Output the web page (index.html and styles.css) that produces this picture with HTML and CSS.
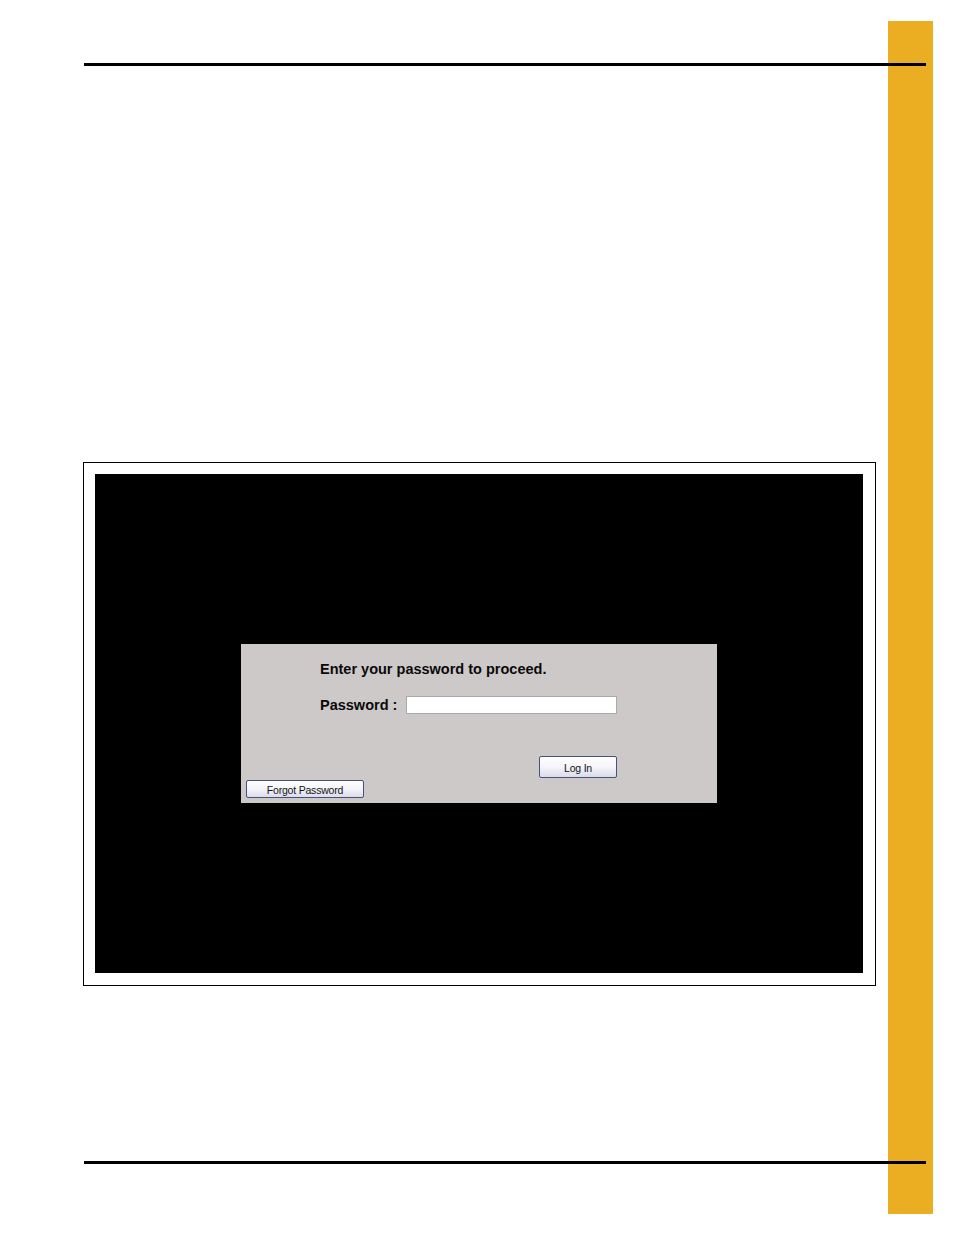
FILE: index.html
```html
<!DOCTYPE html>
<html>
<head>
<meta charset="utf-8">
<link rel="stylesheet" href="styles.css">
</head>
<body>
<div class="page">
  <div class="tab"></div>
  <div class="rule rule-top"></div>
  <div class="frame">
    <div class="screen">
      <div class="dialog">
        <div class="heading">Enter your password to proceed.</div>
        <div class="pwrow">
          <span class="label">Password :</span>
          <span class="input"></span>
        </div>
        <div class="btn login">Log In</div>
        <div class="btn forgot">Forgot Password</div>
      </div>
    </div>
  </div>
  <div class="rule rule-bottom"></div>
</div>
</body>
</html>
```
FILE: styles.css
```css
html, body {
  margin: 0;
  padding: 0;
  background: #ffffff;
}
.page {
  position: relative;
  width: 954px;
  height: 1235px;
  padding-left: 84px;
  box-sizing: border-box;
  display: flex;
  flex-direction: column;
  font-family: "Liberation Sans", Arial, sans-serif;
}
.tab {
  position: absolute;
  left: 888px;
  top: 21px;
  width: 45px;
  height: 1193px;
  background: #ebad22;
  z-index: 0;
}
.rule {
  position: relative;
  z-index: 1;
  width: 842px;
  height: 3px;
  background: #000000;
}
.rule-top {
  margin-top: 63px;
}
.frame {
  margin-top: 396px;
  margin-left: -1px;
  width: 793px;
  height: 524px;
  box-sizing: border-box;
  border: 1px solid #000000;
  padding: 11px 12px 12px 11px;
  background: #ffffff;
}
.screen {
  width: 768px;
  height: 499px;
  background: #000000;
  padding: 170px 0 0 146px;
  box-sizing: border-box;
}
.dialog {
  width: 476px;
  height: 159px;
  background: #cdc9c9;
  display: flex;
  flex-direction: column;
  align-items: flex-start;
  box-sizing: border-box;
}
.heading {
  margin: 17px 0 0 79px;
  font-weight: bold;
  font-size: 14.5px;
  line-height: 16px;
  color: #0a0a0a;
}
.pwrow {
  margin: 19px 0 0 79px;
  display: flex;
  align-items: center;
  height: 18px;
}
.label {
  font-weight: bold;
  font-size: 14.5px;
  line-height: 16px;
  color: #0a0a0a;
  width: 86px;
}
.input {
  width: 211px;
  height: 18px;
  box-sizing: border-box;
  background: #ffffff;
  border: 1px solid #a9a9b0;
}
.btn {
  box-sizing: border-box;
  border: 1px solid #46527a;
  border-radius: 2px;
  background: linear-gradient(#ffffff 0%, #f4f4fa 50%, #dcdcea 100%);
  font-size: 10.5px;
  color: #151515;
  text-align: center;
  letter-spacing: -0.2px;
}
.login {
  margin: 42px 0 0 298px;
  width: 78px;
  height: 22px;
  line-height: 22px;
}
.forgot {
  margin: 2px 0 0 5px;
  width: 118px;
  height: 18px;
  line-height: 18px;
}
.rule-bottom {
  margin-top: 175px;
}
```
